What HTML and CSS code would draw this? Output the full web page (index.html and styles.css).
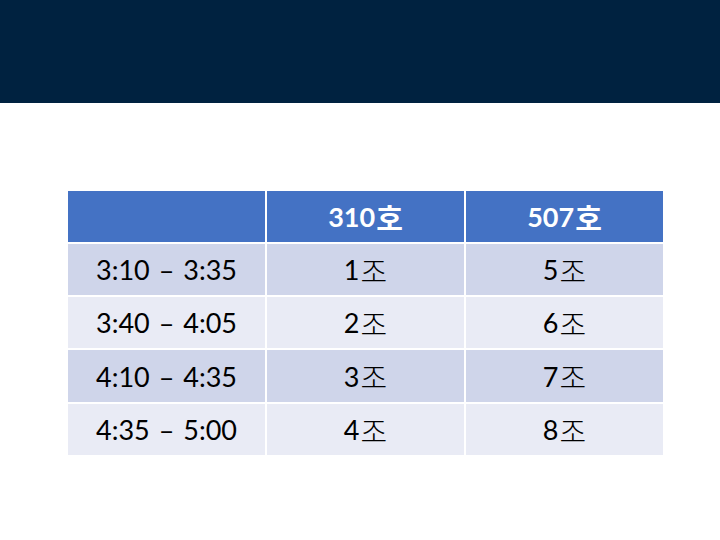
FILE: index.html
```html
<!DOCTYPE html>
<html lang="ko">
<head>
<meta charset="utf-8">
<link rel="stylesheet" href="styles.css">
</head>
<body>
<div class="topbar"></div>
<div class="content">
  <div class="table">
    <div class="cell head"></div>
    <div class="cell head">310<span class="ko">호</span></div>
    <div class="cell head">507<span class="ko">호</span></div>

    <div class="cell odd">3:10 – 3:35</div>
    <div class="cell odd">1<span class="ko">조</span></div>
    <div class="cell odd">5<span class="ko">조</span></div>

    <div class="cell even">3:40 – 4:05</div>
    <div class="cell even">2<span class="ko">조</span></div>
    <div class="cell even">6<span class="ko">조</span></div>

    <div class="cell odd">4:10 – 4:35</div>
    <div class="cell odd">3<span class="ko">조</span></div>
    <div class="cell odd">7<span class="ko">조</span></div>

    <div class="cell even">4:35 – 5:00</div>
    <div class="cell even">4<span class="ko">조</span></div>
    <div class="cell even">8<span class="ko">조</span></div>
  </div>
</div>
</body>
</html>
```
FILE: styles.css
```css
html, body {
  margin: 0;
  padding: 0;
  background: #ffffff;
}
body {
  width: 720px;
  height: 540px;
  overflow: hidden;
  font-family: "Lato", "Noto Sans CJK KR", sans-serif;
}
.topbar {
  height: 103px;
  background: #002240;
}
.content {
  padding: 88px 0 0 68px;
}
.table {
  display: grid;
  grid-template-columns: 197px 197px 197px;
  grid-template-rows: 51px 51px 51px 52px 51px;
  gap: 2px;
  width: 595px;
}
.cell {
  display: flex;
  align-items: center;
  justify-content: center;
  font-size: 27px;
  color: #000000;
  word-spacing: 2px;
}
.ko {
  font-family: "Noto Sans CJK KR", sans-serif;
  font-size: 29px;
  font-weight: 300;
  margin-left: 1px;
}
.head {
  background: #4472c4;
  color: #ffffff;
  font-weight: bold;
}
.head .ko {
  font-weight: bold;
}
.odd {
  background: #cfd5ea;
}
.even {
  background: #e9ebf5;
}
```
